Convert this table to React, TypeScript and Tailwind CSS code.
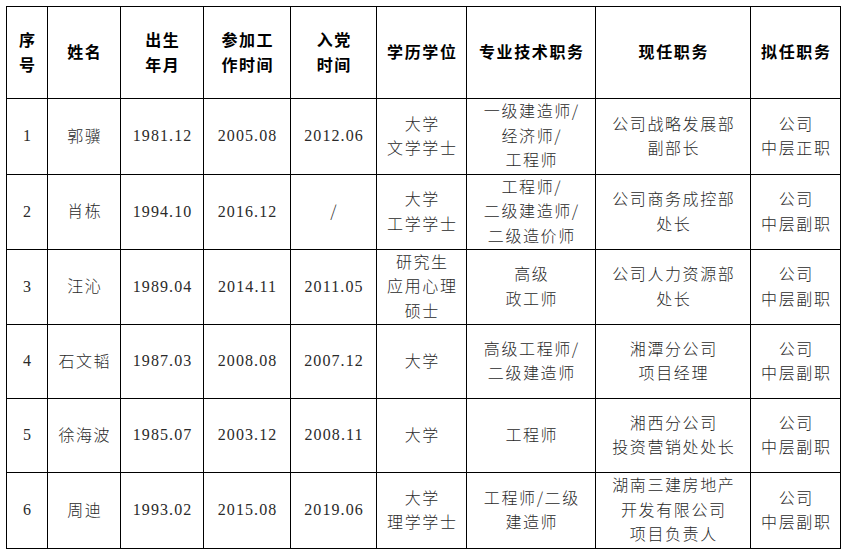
import React from "react";

const cols = "grid-cols-[41px_73px_83px_87px_86px_90px_129px_155px_90px]";
const rows = "grid-rows-[92px_76px_75px_75px_74px_74px_76px]";

const headers: string[][] = [
  ["序", "号"],
  ["姓名"],
  ["出生", "年月"],
  ["参加工", "作时间"],
  ["入党", "时间"],
  ["学历学位"],
  ["专业技术职务"],
  ["现任职务"],
  ["拟任职务"],
];

type Cell = string[];
const data: Cell[][] = [
  [["1"], ["郭骥"], ["1981.12"], ["2005.08"], ["2012.06"], ["大学", "文学学士"], ["一级建造师/", "经济师/", "工程师"], ["公司战略发展部", "副部长"], ["公司", "中层正职"]],
  [["2"], ["肖栋"], ["1994.10"], ["2016.12"], ["/"], ["大学", "工学学士"], ["工程师/", "二级建造师/", "二级造价师"], ["公司商务成控部", "处长"], ["公司", "中层副职"]],
  [["3"], ["汪沁"], ["1989.04"], ["2014.11"], ["2011.05"], ["研究生", "应用心理", "硕士"], ["高级", "政工师"], ["公司人力资源部", "处长"], ["公司", "中层副职"]],
  [["4"], ["石文韬"], ["1987.03"], ["2008.08"], ["2007.12"], ["大学"], ["高级工程师/", "二级建造师"], ["湘潭分公司", "项目经理"], ["公司", "中层副职"]],
  [["5"], ["徐海波"], ["1985.07"], ["2003.12"], ["2008.11"], ["大学"], ["工程师"], ["湘西分公司", "投资营销处处长"], ["公司", "中层副职"]],
  [["6"], ["周迪"], ["1993.02"], ["2015.08"], ["2019.06"], ["大学", "理学学士"], ["工程师/二级", "建造师"], ["湖南三建房地产", "开发有限公司", "项目负责人"], ["公司", "中层副职"]],
];

const isNum = (s: string) => /^[0-9.]+$/.test(s);

export default function App() {
  return (
    <div className="w-[848px] h-[555px] bg-white pt-[6px] pl-[6px] font-['Liberation_Serif','Noto_Sans_CJK_SC',serif]">
      <div className={`grid ${cols} ${rows} w-max border-l border-t border-black`}>
        {headers.map((h, i) => (
          <div
            key={"h" + i}
            className="flex flex-col items-center justify-center pb-[2px] border-r border-b border-black text-center text-[16px] leading-[24.5px] tracking-[1.6px] font-bold text-black font-['Noto_Sans_CJK_SC',sans-serif]"
          >
            {h.map((l, j) => (
              <div key={j} className="pl-[1.6px]">{l}</div>
            ))}
          </div>
        ))}
        {data.map((r, ri) =>
          r.map((c, ci) => {
            const num = c.every(isNum);
            return (
              <div
                key={ri + "-" + ci}
                className={`flex flex-col items-center justify-center border-r border-b border-black text-center text-[#2a2a2a] ${num ? "" : "pb-[3px]"}`}
              >
                {c.map((l, j) =>
                  isNum(l) ? (
                    <div key={j} className="text-[16px] leading-[24.5px] tracking-[1.1px] pl-[1.1px] font-['Liberation_Serif',serif]">
                      {l}
                    </div>
                  ) : (
                    <div key={j} className="text-[16px] leading-[24.5px] tracking-[1.6px] pl-[1.6px] font-light font-['Noto_Sans_CJK_SC',sans-serif]">
                      {l}
                    </div>
                  )
                )}
              </div>
            );
          })
        )}
      </div>
    </div>
  );
}
